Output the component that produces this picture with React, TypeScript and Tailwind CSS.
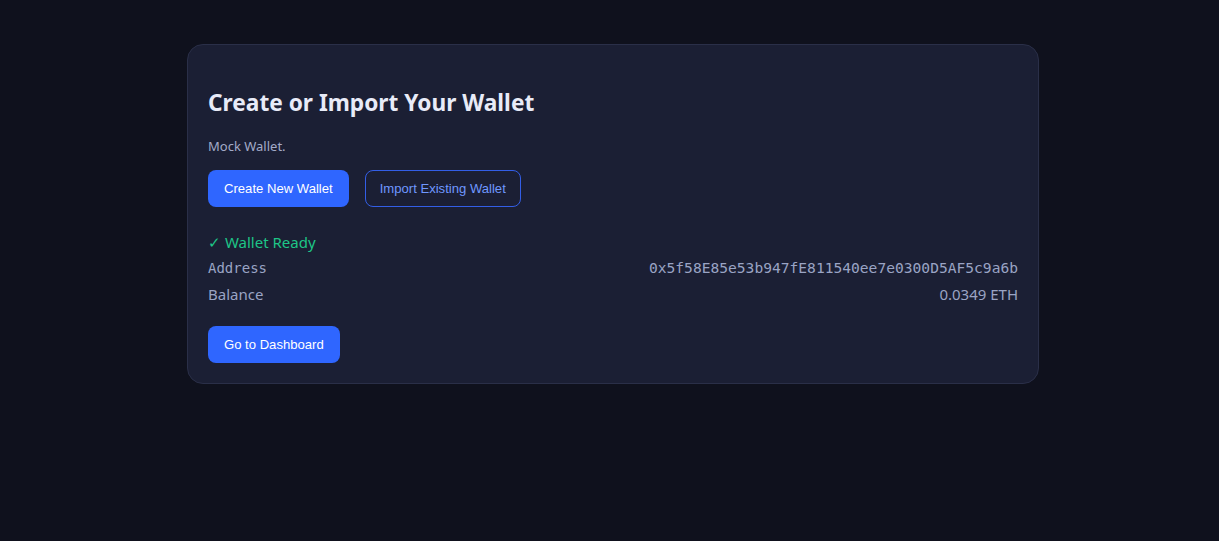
import React from "react";

const ADDRESS = "0x5f58E85e53b947fE811540ee7e0300D5AF5c9a6b";

const uiFont = "font-['Noto_Sans','Open_Sans',sans-serif]";
const btnFont = "font-['Liberation_Sans',Arial,sans-serif]";

export default function App() {
  return (
    <div className="min-h-[541px] w-full bg-[#0f111d] pt-[44px]">
      <div className="ml-[187px] w-[852px] rounded-2xl border border-[#2a2f48] bg-[#1b1f34] px-5 pt-5 pb-5">
        <h2 className={`mt-[22px] text-[22.7px] leading-8 font-bold text-[#e8ebf8] ${uiFont}`}>
          Create or Import Your Wallet
        </h2>
        <p className={`mt-[17px] text-[13px] leading-5 text-[#a3abc8] ${uiFont}`}>Mock Wallet.</p>
        <div className="mt-[14px] flex gap-4">
          <button className={`h-[37px] rounded-lg bg-[#2f66ff] px-4 text-[13.1px] text-white ${btnFont}`}>
            Create New Wallet
          </button>
          <button
            className={`h-[37px] rounded-lg border border-[#335ee6] px-[14px] text-[13.1px] text-[#6f98ff] ${btnFont}`}
          >
            Import Existing Wallet
          </button>
        </div>

        <div className={`mt-6 text-[15px] leading-[22px] text-[#1ec587] ${uiFont}`}>✓ Wallet Ready</div>
        <div className="mt-1 flex flex-col gap-1 text-[#9aa4c4]">
          <div className="flex items-center justify-between leading-[22px]">
            <span className="font-['DejaVu_Sans_Mono',monospace] text-[14px]">Address</span>
            <span className="font-['DejaVu_Sans_Mono',monospace] text-[14.6px]">{ADDRESS}</span>
          </div>
          <div className={`flex items-center justify-between text-[15px] leading-[22px] ${uiFont}`}>
            <span>Balance</span>
            <span>0.0349 ETH</span>
          </div>
        </div>

        <button
          className={`mt-[21px] h-[37px] rounded-lg bg-[#2f66ff] px-4 text-[13.1px] text-white ${btnFont}`}
        >
          Go to Dashboard
        </button>
      </div>
    </div>
  );
}
